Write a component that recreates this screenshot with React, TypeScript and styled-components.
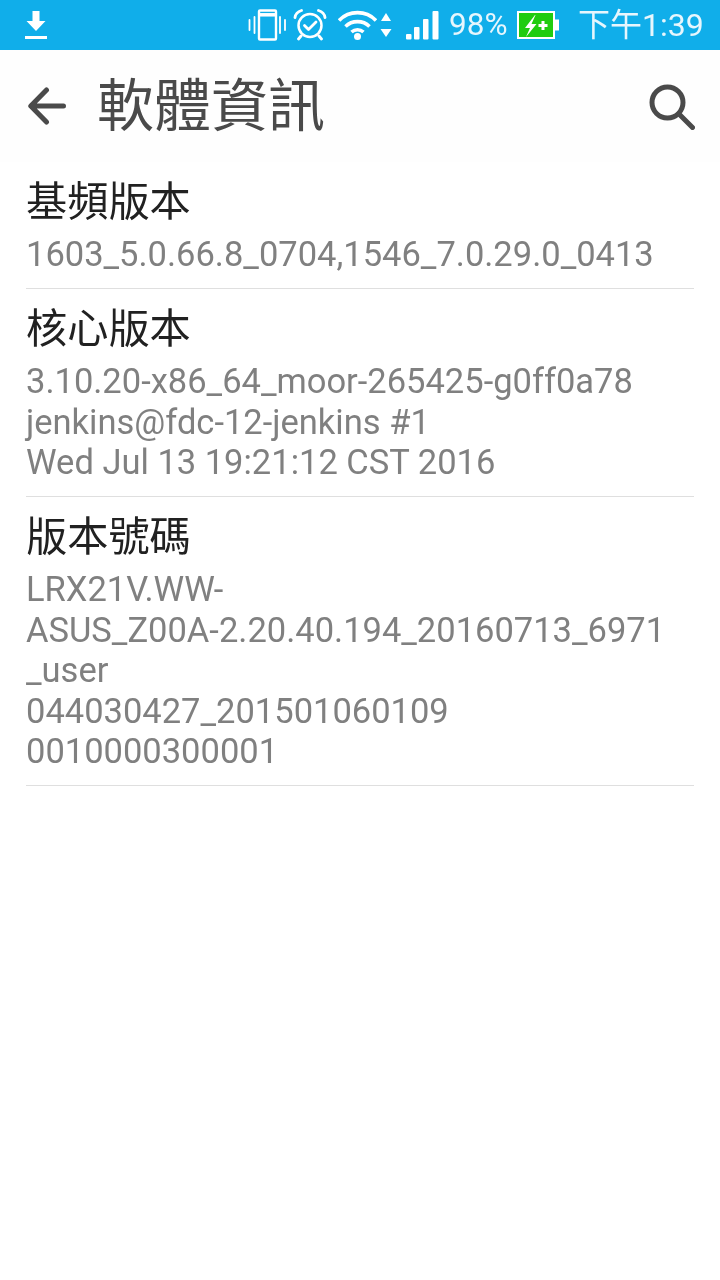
import React from "react";
import styled, { createGlobalStyle } from "styled-components";

const Global = createGlobalStyle`
  html, body { margin: 0; padding: 0; background: #fff; }
  #root { width: 720px; height: 1280px; overflow: hidden; }
`;
const CJK = `"Noto Sans CJK TC", "Noto Sans CJK SC", Roboto, sans-serif`;

const Page = styled.div`
  width: 720px; height: 1280px; background: #fff; display: flex; flex-direction: column;
  font-family: Roboto, ${CJK};
`;
const StatusBar = styled.div`
  height: 50px; background: #10aeea; display: flex; align-items: center;
  padding: 0 16px 0 24px; color: #fff; flex: none;
`;
const StatusRight = styled.div`
  margin-left: auto; display: flex; align-items: center;
`;
const Slot = styled.span<{ $ml: number }>`
  display: flex; margin-left: ${(p) => p.$ml}px;
`;
const Percent = styled.span`
  font: 400 31.500px/50px Roboto, sans-serif; margin-left: 10px; color: #e6f6fd;
  will-change: transform;
`;
const Clock = styled.span`
  font: 400 32px/46px Roboto, ${CJK}; margin-left: 19px; color: #e6f6fd;
  will-change: transform;
`;
const Toolbar = styled.div`
  height: 112px; display: flex; align-items: center; padding: 0 25px 0 28px; flex: none;
  background: #fefefe;
`;
const Title = styled.h1`
  margin: -11px 0 0 31px; font: 400 57px/80px ${CJK}; color: #4a4a4a;
  will-change: transform;
`;
const SearchSlot = styled.div` margin-left: auto; margin-top: 1px; display: flex; `;
const BackSlot = styled.div` display: flex; margin-top: -1px; `;
const List = styled.div` padding: 0 26px; `;
const Row = styled.div`
  padding: 9px 0 14px; border-bottom: 1px solid #dfdfdf;
`;
const RowTitle = styled.div`
  font: 400 41.200px/54px ${CJK}; color: #212121; margin-bottom: 8.500px;
  will-change: transform;
`;
const RowText = styled.div`
  font: 400 34.500px/40.500px Roboto, sans-serif; color: #808080; white-space: pre-line;
  will-change: transform;
`;

const Download = () => (
  <svg width="24" height="30" viewBox="0 0 24 30" fill="#fff">
    <path d="M8.500 1h7v10h6L12 21 2.500 11h6z" /><rect x="1" y="26" width="22" height="3" />
  </svg>
);
const Vibrate = () => (
  <svg width="38" height="32" viewBox="0 0 38 32" fill="none" stroke="#fff" strokeLinecap="round">
    <rect x="11" y="1.500" width="17" height="29" rx="1" strokeWidth="2.400" />
    <path d="M12 5.800h15" strokeWidth="3.500" strokeLinecap="butt" />
    <path d="M6.500 8v16M1.500 11v10M32 8v16M37 11v10" strokeWidth="1.800" />
  </svg>
);
const Alarm = () => (
  <svg width="34" height="32" viewBox="0 0 34 32" fill="none" stroke="#fff" strokeWidth="2.500" strokeLinecap="round" strokeLinejoin="round">
    <circle cx="17" cy="16.500" r="11.500" />
    <path d="M11.500 16.500l4 4 7.500-7.500" strokeWidth="2.800" />
    <path d="M2 8.500C2.500 5 5 2.500 8.500 1.500M32 8.500C31.500 5 29 2.500 25.500 1.500M8 27l-2.500 3M26 27l2.500 3" strokeWidth="2.800" />
  </svg>
);
const Wifi = () => (
  <svg width="39" height="32" viewBox="0 0 39 32" fill="none" stroke="#fff" strokeWidth="3.600">
    <path d="M1 11.500C11 1 28 1 38 11.500M7.500 17.500c6.500-6.500 17.500-6.500 24 0M13.500 23c3.500-3 8.500-3 12 0" />
    <circle cx="19.500" cy="27.500" r="3.500" fill="#fff" stroke="none" />
  </svg>
);
const Arrows = () => (
  <svg width="12" height="26" viewBox="0 0 12 26" fill="#fff">
    <path d="M6 1l5 8H1zM6 25L.5 17h11z" />
  </svg>
);
const Signal = () => (
  <svg width="33" height="30" viewBox="0 0 33 30" fill="#fff">
    <rect x="0" y="24" width="5.500" height="5.500" rx="1" />
    <rect x="8" y="17" width="5.500" height="12.500" rx="1" />
    <rect x="17" y="9" width="5.500" height="20.500" rx="1" />
    <rect x="26.500" y="1" width="6" height="28.500" rx="1" />
  </svg>
);
const Battery = () => (
  <svg width="42" height="30" viewBox="0 0 42 30">
    <rect x="1" y="2" width="36" height="26" fill="#20cc10" stroke="#fff" strokeWidth="2" />
    <rect x="38" y="9.500" width="4" height="11" fill="#fff" />
    <path d="M18 5L8 18h5l-4 9L19.500 14h-5l4-9z" fill="#fff" />
    <path d="M26 11v9M21.500 15.500h9" stroke="#fff" strokeWidth="3" />
  </svg>
);
const Back = () => (
  <svg width="38" height="38" viewBox="0 0 38 38" fill="none" stroke="#4a4a4a" strokeWidth="5" strokeLinecap="round" strokeLinejoin="round">
    <path d="M35.500 19H3M18.500 3L2.800 19l15.700 16" />
  </svg>
);
const Search = () => (
  <svg width="46" height="46" viewBox="0 0 46 46" fill="none" stroke="#4a4a4a" strokeWidth="5" strokeLinecap="round">
    <circle cx="18.500" cy="18.500" r="15.500" />
    <path d="M30 30l13.500 13.500" />
  </svg>
);

const rows = [
  { title: "基頻版本", text: "1603_5.0.66.8_0704,1546_7.0.29.0_0413" },
  { title: "核心版本", text: "3.10.20-x86_64_moor-265425-g0ff0a78\njenkins@fdc-12-jenkins #1\nWed Jul 13 19:21:12 CST 2016" },
  { title: "版本號碼", text: "LRX21V.WW-\nASUS_Z00A-2.20.40.194_20160713_6971\n_user\n044030427_201501060109\n0010000300001" },
];

export default function App() {
  return (
    <Page>
      <Global />
      <StatusBar>
        <Download />
        <StatusRight>
          <Slot $ml={0}><Vibrate /></Slot>
          <Slot $ml={7}><Alarm /></Slot>
          <Slot $ml={11}><Wifi /></Slot>
          <Slot $ml={3}><Arrows /></Slot>
          <Slot $ml={14}><Signal /></Slot>
          <Percent>98%</Percent>
          <Slot $ml={10}><Battery /></Slot>
          <Clock>下午1:39</Clock>
        </StatusRight>
      </StatusBar>
      <Toolbar>
        <BackSlot><Back /></BackSlot>
        <Title>軟體資訊</Title>
        <SearchSlot><Search /></SearchSlot>
      </Toolbar>
      <List>
        {rows.map((r) => (
          <Row key={r.title}>
            <RowTitle>{r.title}</RowTitle>
            <RowText>{r.text}</RowText>
          </Row>
        ))}
      </List>
    </Page>
  );
}
